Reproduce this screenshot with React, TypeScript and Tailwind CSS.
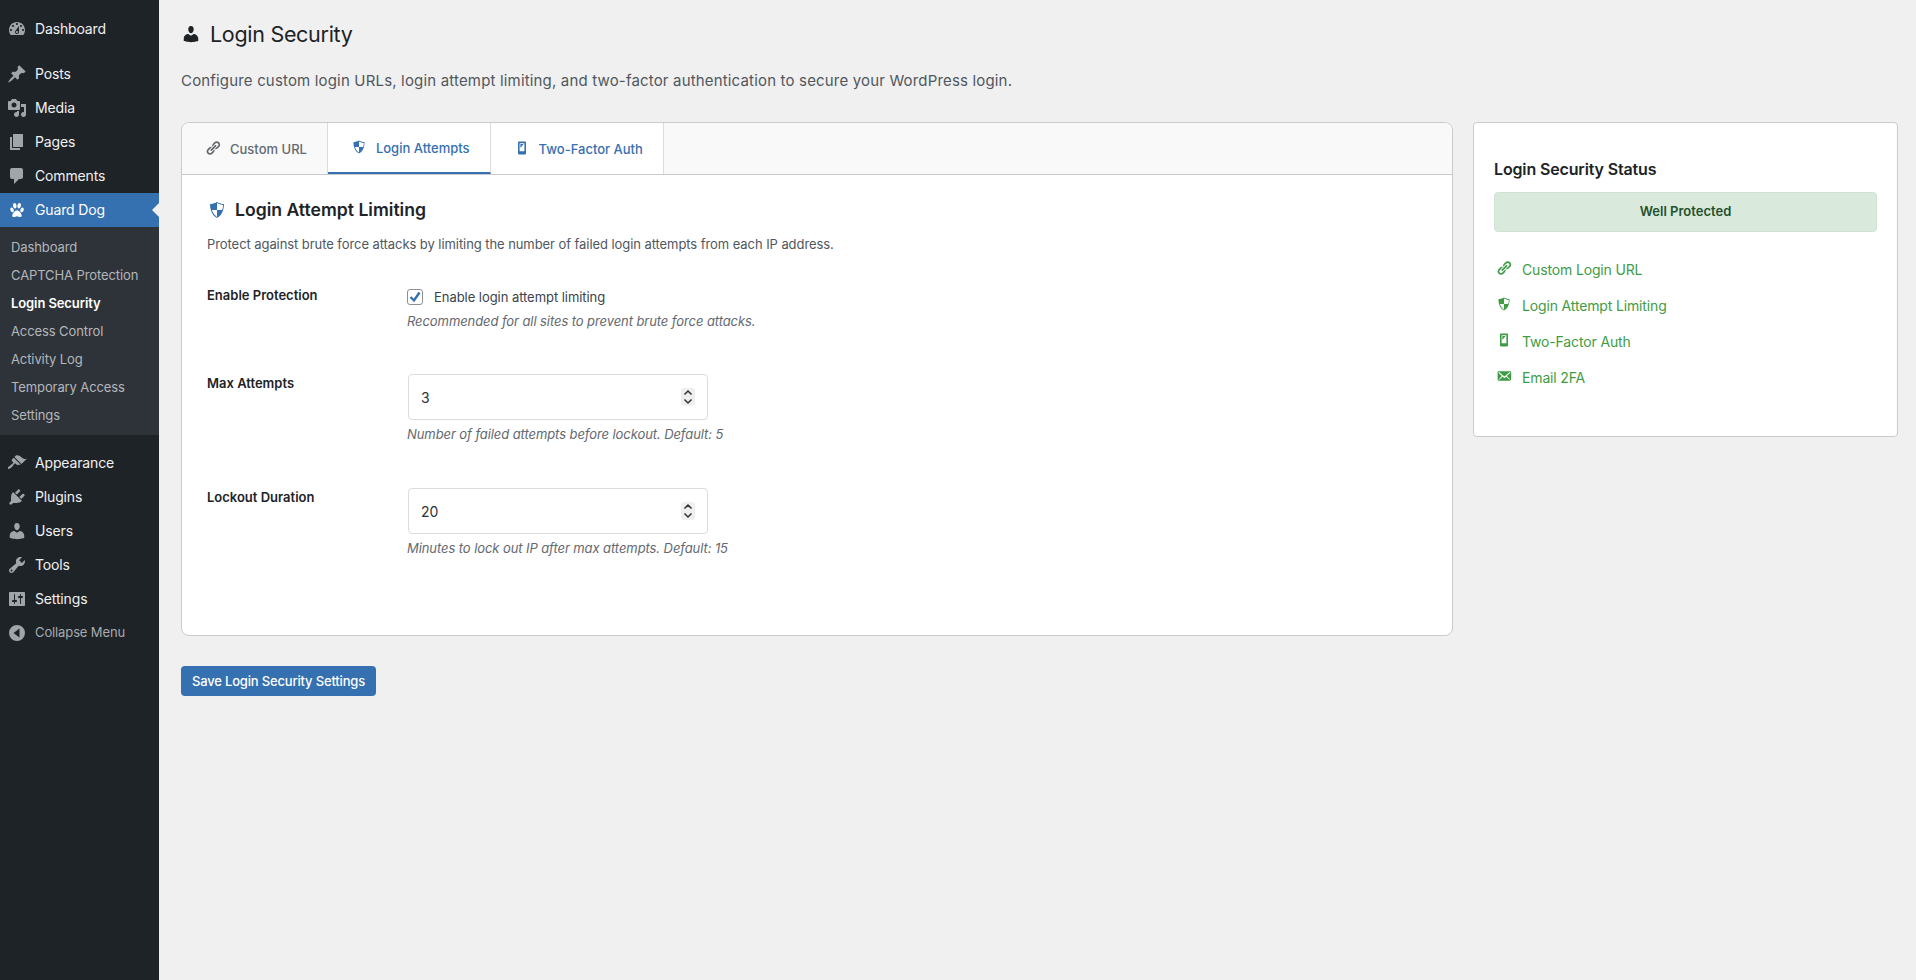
const icons: Record<string, string> = {
  dashboard:
    "M3.76 16h12.48c1.1-1.37 1.76-3.11 1.76-5 0-4.42-3.58-8-8-8s-8 3.58-8 8c0 1.89.66 3.63 1.76 5zM10 4c.55 0 1 .45 1 1s-.45 1-1 1-1-.45-1-1 .45-1 1-1zM6 6c.55 0 1 .45 1 1s-.45 1-1 1-1-.45-1-1 .45-1 1-1zm8 0c.55 0 1 .45 1 1s-.45 1-1 1-1-.45-1-1 .45-1 1-1zm-5.37 5.55L12 7v6c0 1.1-.9 2-2 2s-2-.9-2-2c0-.57.24-1.08.63-1.45zM4 10c.55 0 1 .45 1 1s-.45 1-1 1-1-.45-1-1 .45-1 1-1zm12 0c.55 0 1 .45 1 1s-.45 1-1 1-1-.45-1-1 .45-1 1-1zm-5 3c0-.55-.45-1-1-1s-1 .45-1 1 .45 1 1 1 1-.45 1-1z",
  post: "M10.44 3.02l1.82-1.82 6.36 6.35-1.83 1.82c-1.05-.68-2.48-.57-3.41.36l-.75.75c-.92.93-1.04 2.35-.35 3.41l-1.83 1.82-2.41-2.41-2.8 2.79c-.42.42-3.38 2.71-3.8 2.29s1.86-3.39 2.28-3.81l2.79-2.79L4.1 9.36l1.83-1.82c1.05.69 2.48.57 3.41-.36l.75-.75c.93-.92 1.05-2.35.35-3.41z",
  media:
    "M13 11V4c0-.55-.45-1-1-1h-1.67L9 1H5L3.67 3H2c-.55 0-1 .45-1 1v7c0 .55.45 1 1 1h10c.55 0 1-.45 1-1zM7 4.5c1.38 0 2.5 1.12 2.5 2.5S8.38 9.5 7 9.5 4.5 8.38 4.5 7 5.62 4.5 7 4.5zM14 6h5v10.5c0 1.38-1.12 2.5-2.5 2.5S14 17.88 14 16.5s1.12-2.5 2.5-2.5c.17 0 .34.02.5.05V9h-3V6zm-4 8.05V13h2v3.5c0 1.38-1.12 2.5-2.5 2.5S7 17.88 7 16.5 8.12 14 9.5 14c.17 0 .34.02.5.05z",
  page: "M6 15V2h10v13H6zm-1 1h8v2H3V5h2v11z",
  comments:
    "M5 2h9c1.1 0 2 .9 2 2v7c0 1.1-.9 2-2 2h-2l-5 5v-5H5c-1.1 0-2-.9-2-2V4c0-1.1.9-2 2-2z",
  paw: "M11.9 8.4c1.3 0 2.1-1.9 2.1-3.1 0-1-.5-2.2-1.5-2.2-1.3 0-2.1 1.9-2.1 3.1 0 1 .5 2.2 1.5 2.2zm-3.8 0c1 0 1.5-1.2 1.5-2.2C9.6 4.9 8.8 3 7.5 3 6.5 3 6 4.2 6 5.2c-.1 1.3.7 3.2 2.1 3.2zm7.4-1c-1.3 0-2.2 1.8-2.2 3.1 0 .9.4 1.8 1.3 1.8 1.3 0 2.2-1.8 2.2-3.1 0-.9-.5-1.8-1.3-1.8zm-8.7 3.1c0-1.3-1-3.1-2.2-3.1-.9 0-1.3.9-1.3 1.8 0 1.3 1 3.1 2.2 3.1.9 0 1.3-.9 1.3-1.8zm3.2-.2c-2 0-4.7 3.2-4.7 5.4 0 1 .7 1.3 1.5 1.3 1.2 0 2.1-.8 3.2-.8 1 0 1.9.8 3 .8.8 0 1.7-.2 1.7-1.3 0-2.2-2.7-5.4-4.7-5.4z",
  appearance:
    "M14.48 11.06L7.41 3.99l1.5-1.5c.5-.56 2.3-.47 3.51.32 1.21.8 1.43 1.28 2.91 2.1 1.18.64 2.45 1.26 4.45.85zm-.71.71L6.7 4.7 4.93 6.47c-.39.39-.39 1.02 0 1.41l1.06 1.06c.39.39.39 1.03 0 1.42-.6.6-1.43 1.11-2.21 1.69-.35.26-.7.53-1.01.84C1.43 13.23.4 14.95 1.1 15.66c.7.71 2.43-.32 3.77-1.66.31-.31.58-.66.84-1.01.58-.78 1.09-1.61 1.69-2.21.39-.39 1.02-.39 1.41 0l1.06 1.06c.39.39 1.02.39 1.41 0z",
  plugins:
    "M13.11 4.36L9.87 7.6 8 5.73l3.24-3.24c.35-.34 1.05-.2 1.56.32.52.51.66 1.21.31 1.55zm-8 1.77l.91-1.12 9.01 9.01-1.19.84c-.71.71-2.63 1.16-3.82 1.16H6.14L4.9 17.26c-.59.59-1.54.59-2.12 0-.59-.58-.59-1.53 0-2.12l1.24-1.24v-3.88c0-1.13.4-3.19 1.09-3.89zm7.26 3.97l3.24-3.24c.34-.35 1.04-.21 1.55.31.52.51.66 1.21.31 1.55l-3.24 3.25z",
  users:
    "M10 9.25c-2.27 0-2.73-3.44-2.73-3.44C7 4.02 7.82 2 9.97 2c2.16 0 2.98 2.02 2.71 3.81 0 0-.41 3.44-2.68 3.44zm0 2.57L12.72 10c2.39 0 4.52 2.33 4.52 4.53v2.49s-3.65 1.13-7.24 1.13c-3.65 0-7.24-1.13-7.24-1.13v-2.49c0-2.25 1.94-4.48 4.47-4.48z",
  tools:
    "M16.68 9.77c-1.34 1.34-3.3 1.67-4.95.99l-5.41 6.52c-.99.99-2.59.99-3.58 0s-.99-2.59 0-3.57l6.52-5.42c-.68-1.65-.35-3.61.99-4.95 1.28-1.28 3.12-1.62 4.72-1.06l-2.89 2.89 2.82 2.82 2.86-2.87c.53 1.58.18 3.39-1.08 4.65zM3.81 16.21c.4.39 1.04.39 1.43 0 .4-.4.4-1.04 0-1.43-.39-.4-1.03-.4-1.43 0-.39.39-.39 1.03 0 1.43z",
  settings:
    "M18 16V4c0-.55-.45-1-1-1H3c-.55 0-1 .45-1 1v12c0 .55.45 1 1 1h14c.55 0 1-.45 1-1zM8 11h1c.55 0 1 .45 1 1s-.45 1-1 1H8v1.5c0 .28-.22.5-.5.5s-.5-.22-.5-.5V13H6c-.55 0-1-.45-1-1s.45-1 1-1h1V5.5c0-.28.22-.5.5-.5s.5.22.5.5V11zm5-2h-1c-.55 0-1-.45-1-1s.45-1 1-1h1V5.5c0-.28.22-.5.5-.5s.5.22.5.5V7h1c.55 0 1 .45 1 1s-.45 1-1 1h-1v5.5c0 .28-.22.5-.5.5s-.5-.22-.5-.5V9z",
  collapse:
    "M10 2a8 8 0 1 1 0 16 8 8 0 0 1 0-16zm2.5 3.5L6.5 10l6 4.5v-9z",
  link: "M17.74 2.76c1.68 1.69 1.68 4.41 0 6.1l-1.53 1.52c-1.12 1.12-2.7 1.47-4.14 1.09l2.62-2.61.76-.77.76-.76c.84-.84.84-2.2 0-3.04-.84-.85-2.2-.85-3.04 0l-.77.76-3.38 3.38c-.37-1.44-.02-3.02 1.1-4.14l1.52-1.53c1.69-1.68 4.42-1.68 6.1 0zM8.59 13.43l5.34-5.34c.42-.42.42-1.1 0-1.52-.44-.43-1.13-.39-1.53 0l-5.33 5.34c-.42.42-.42 1.1 0 1.52.44.43 1.13.39 1.52 0zm-.76 2.29l4.14-4.15c.38 1.44.03 3.02-1.09 4.14l-1.52 1.53c-1.69 1.68-4.41 1.68-6.1 0-1.68-1.68-1.68-4.42 0-6.1l1.53-1.52c1.12-1.12 2.7-1.47 4.14-1.1l-4.14 4.15c-.85.84-.85 2.2 0 3.05.84.84 2.2.84 3.04 0z",
  shield:
    "M10 2s3 2 7 2c0 11-7 14-7 14S3 15 3 4c4 0 7-2 7-2zm0 8h5s1-1 1-5c0 0-5-1-6-2v7H5c1 4 5 7 5 7v-7z",
  phone:
    "M6 2h8c.55 0 1 .45 1 1v14c0 .55-.45 1-1 1H6c-.55 0-1-.45-1-1V3c0-.55.45-1 1-1zm7 12V4H7v10h6zM8 5h4l-4 5V5z",
  email:
    "M19 14.5v-9c0-.83-.67-1.5-1.5-1.5H3.49c-.83 0-1.5.67-1.5 1.5v9c0 .83.67 1.5 1.5 1.5H17.5c.83 0 1.5-.67 1.5-1.5zm-1.31-9.11c.33.33.15.67-.03.84L13.6 9.95l3.9 4.06c.12.14.2.36.06.51-.13.16-.43.15-.56.05l-4.37-3.73-2.14 1.95-2.13-1.95-4.37 3.73c-.13.1-.43.11-.56-.05-.14-.15-.06-.37.06-.51l3.9-4.06-4.06-3.72c-.18-.17-.36-.51-.03-.84s.67-.17.95.07l6.24 5.04 6.25-5.04c.28-.24.62-.4.95-.07z",
};

const Icon = ({ name, className }: { name: string; className?: string }) => (
  <svg viewBox="0 0 20 20" fill="currentColor" fillRule="evenodd" className={className}>
    <path d={icons[name]} />
  </svg>
);

const MenuItem = ({ icon, label, active }: { icon: string; label: string; active?: boolean }) => (
  <div
    className={`relative flex items-center h-[34px] text-[14px] tracking-[-0.15px] ${
      active ? "bg-[#3570b0] text-white" : "text-[#f0f0f1]"
    }`}
  >
    <Icon
      name={icon}
      className={`ml-[7px] mr-[8px] size-5 shrink-0 ${active ? "text-white" : "text-[#a0a5aa]"}`}
    />
    <span className="pb-[2px]">{label}</span>
    {active && (
      <span className="absolute right-0 top-[10px] border-y-[7px] border-r-[7px] border-y-transparent border-r-[#f0f0f0]" />
    )}
  </div>
);

const subItems = [
  "Dashboard",
  "CAPTCHA Protection",
  "Login Security",
  "Access Control",
  "Activity Log",
  "Temporary Access",
  "Settings",
];

const Sidebar = () => (
  <aside className="w-[159px] shrink-0 bg-[#1e2327] pt-3">
    <MenuItem icon="dashboard" label="Dashboard" />
    <div className="mt-[11px]">
      <MenuItem icon="post" label="Posts" />
      <MenuItem icon="media" label="Media" />
      <MenuItem icon="page" label="Pages" />
      <MenuItem icon="comments" label="Comments" />
      <MenuItem icon="paw" label="Guard Dog" active />
    </div>
    <ul className="bg-[#2e333a] py-[6px]">
      {subItems.map((s) => (
        <li
          key={s}
          className={`flex items-center h-[28px] pt-[2px] pl-[11px] text-[13px] tracking-[-0.1px] ${
            s === "Login Security" ? "font-semibold text-white" : "text-[#b4b7ba]"
          }`}
        >
          {s}
        </li>
      ))}
    </ul>
    <div className="mt-[11px]">
      <MenuItem icon="appearance" label="Appearance" />
      <MenuItem icon="plugins" label="Plugins" />
      <MenuItem icon="users" label="Users" />
      <MenuItem icon="tools" label="Tools" />
      <MenuItem icon="settings" label="Settings" />
      <div className="flex items-center h-[34px] text-[13px] tracking-[-0.12px] text-[#a7aaad]">
        <Icon name="collapse" className="ml-[7px] mr-[8px] size-5 text-[#a0a5aa]" />
        Collapse Menu
      </div>
    </div>
  </aside>
);

const Tab = ({ icon, label, tone }: { icon: string; label: string; tone: "idle" | "active" | "open" }) => (
  <div
    className={`flex items-center gap-[9px] h-full pl-[23px] pr-[20px] pt-[2px] border-r border-[#dcdcde] text-[13px] font-medium ${
      tone === "idle"
        ? "text-[#646970]"
        : tone === "active"
          ? "bg-white text-[#3570b0] border-b-2 border-b-[#3570b0] -mb-px"
          : "bg-white text-[#3570b0]"
    }`}
  >
    <Icon name={icon} className="size-4 -mt-[4px]" />
    {label}
  </div>
);

const Note = ({ children, className }: { children: string; className?: string }) => (
  <p className={`text-[13px] leading-[18px] tracking-[-0.08px] italic text-[#646970] ${className}`}>{children}</p>
);

const NumberField = ({ value }: { value: string }) => (
  <div className="flex items-center w-[300px] h-[46px] border border-[#dcdcde] rounded-[4px] bg-white pl-[12px] pr-[12px] ml-px">
    <input
      type="text"
      readOnly
      value={value}
      className="flex-1 min-w-0 text-[14px] text-[#2c3338] outline-none bg-transparent"
    />
    <svg viewBox="0 0 14 18" className="w-[14px] h-[18px]" fill="none" stroke="#2c3338" strokeWidth="1.5">
      <rect x="0" y="0" width="14" height="18" rx="3" fill="#efefef" stroke="none" />
      <path d="M3.5 6.5 7 3l3.5 3.5M3.5 11.5 7 15l3.5-3.5" />
    </svg>
  </div>
);

const statusItems = [
  { icon: "link", label: "Custom Login URL" },
  { icon: "shield", label: "Login Attempt Limiting" },
  { icon: "phone", label: "Two-Factor Auth" },
  { icon: "email", label: "Email 2FA" },
];

const StatusCard = () => (
  <section className="w-[425px] h-[315px] shrink-0 bg-white border border-[#c9cbce] rounded-[4px] px-5 pt-[34px]">
    <h2 className="text-[16px] leading-6 tracking-[-0.15px] font-semibold text-[#1d2327]">Login Security Status</h2>
    <div className="mt-[11px] h-10 flex items-center justify-center rounded-[4px] border border-[#cfe3d3] bg-[#d9e9dc] text-[13px] font-semibold text-[#23512b]">
      Well Protected
    </div>
    <ul className="mt-[19px]">
      {statusItems.map((i) => (
        <li key={i.label} className="flex items-center h-9 text-[14px] tracking-[-0.15px] text-[#3f9c45]">
          <Icon name={i.icon} className="size-4 ml-[2px] mr-[10px] -mt-[3px]" />
          {i.label}
        </li>
      ))}
    </ul>
  </section>
);

export default function App() {
  return (
    <div className="flex min-h-screen bg-[#f0f0f0] font-['Inter',sans-serif]">
      <Sidebar />
      <main className="flex-1 min-w-0 pl-[22px] pr-[18px]">
        <h1 className="flex items-center gap-[9px] mt-[19px] h-[30px] text-[21.5px] tracking-[-0.3px] text-[#1d2327]">
          <Icon name="users" className="size-5" />
          Login Security
        </h1>
        <p className="mt-[20px] text-[15px] leading-6 tracking-[0.17px] text-[#50575e]">
          Configure custom login URLs, login attempt limiting, and two-factor authentication to secure your WordPress login.
        </p>
        <div className="flex items-start gap-5 mt-[29px]">
          <div className="flex-1 min-w-0">
            <section className="h-[514px] bg-white border border-[#c9cbce] rounded-lg overflow-hidden">
              <nav className="flex h-[52px] bg-[#f9f9f9] border-b border-[#c9cbce]">
                <Tab icon="link" label="Custom URL" tone="idle" />
                <Tab icon="shield" label="Login Attempts" tone="active" />
                <Tab icon="phone" label="Two-Factor Auth" tone="open" />
              </nav>
              <div className="px-[25px] pt-[22px]">
                <h2 className="flex items-center gap-[8px] text-[17.6px] leading-[26px] font-semibold text-[#1d2327]">
                  <Icon name="shield" className="size-5 text-[#3570b0]" />
                  Login Attempt Limiting
                </h2>
                <p className="mt-[12px] text-[13px] leading-[18px] tracking-[-0.07px] text-[#50575e]">
                  Protect against brute force attacks by limiting the number of failed login attempts from each IP address.
                </p>
                <div className="flex mt-[34px]">
                  <label className="w-[200px] shrink-0 -mt-px text-[13px] leading-[18px] font-semibold text-[#1d2327]">
                    Enable Protection
                  </label>
                  <div>
                    <label className="flex items-center h-[18px] gap-[11px] mt-[2px] text-[13px] tracking-[-0.05px] text-[#3c434a]">
                      <span className="relative flex size-4 -mt-[2px] rounded-[3px] border border-[#8c8f94] bg-white">
                        <input type="checkbox" readOnly checked className="absolute inset-0 appearance-none" />
                        <svg viewBox="0 0 16 16" className="absolute -left-px -top-px size-4" fill="none" stroke="#3570b0" strokeWidth="2.4">
                          <path d="M3.5 8 7 11.5 12.5 3.5" />
                        </svg>
                      </span>
                      Enable login attempt limiting
                    </label>
                    <Note className="mt-[5px]">Recommended for all sites to prevent brute force attacks.</Note>
                  </div>
                </div>
                <div className="flex mt-[44px]">
                  <label className="w-[200px] shrink-0 text-[13px] leading-[18px] font-semibold text-[#1d2327]">
                    Max Attempts
                  </label>
                  <div>
                    <NumberField value="3" />
                    <Note className="mt-[5px]">Number of failed attempts before lockout. Default: 5</Note>
                  </div>
                </div>
                <div className="flex mt-[45px]">
                  <label className="w-[200px] shrink-0 text-[13px] leading-[18px] font-semibold text-[#1d2327]">
                    Lockout Duration
                  </label>
                  <div>
                    <NumberField value="20" />
                    <Note className="mt-[5px]">Minutes to lock out IP after max attempts. Default: 15</Note>
                  </div>
                </div>
              </div>
            </section>
            <button className="mt-[30px] h-[30px] w-[195px] pt-[2px] rounded-[4px] bg-[#3570b0] text-[13px] tracking-[-0.17px] font-medium text-white">
              Save Login Security Settings
            </button>
          </div>
          <StatusCard />
        </div>
      </main>
    </div>
  );
}
